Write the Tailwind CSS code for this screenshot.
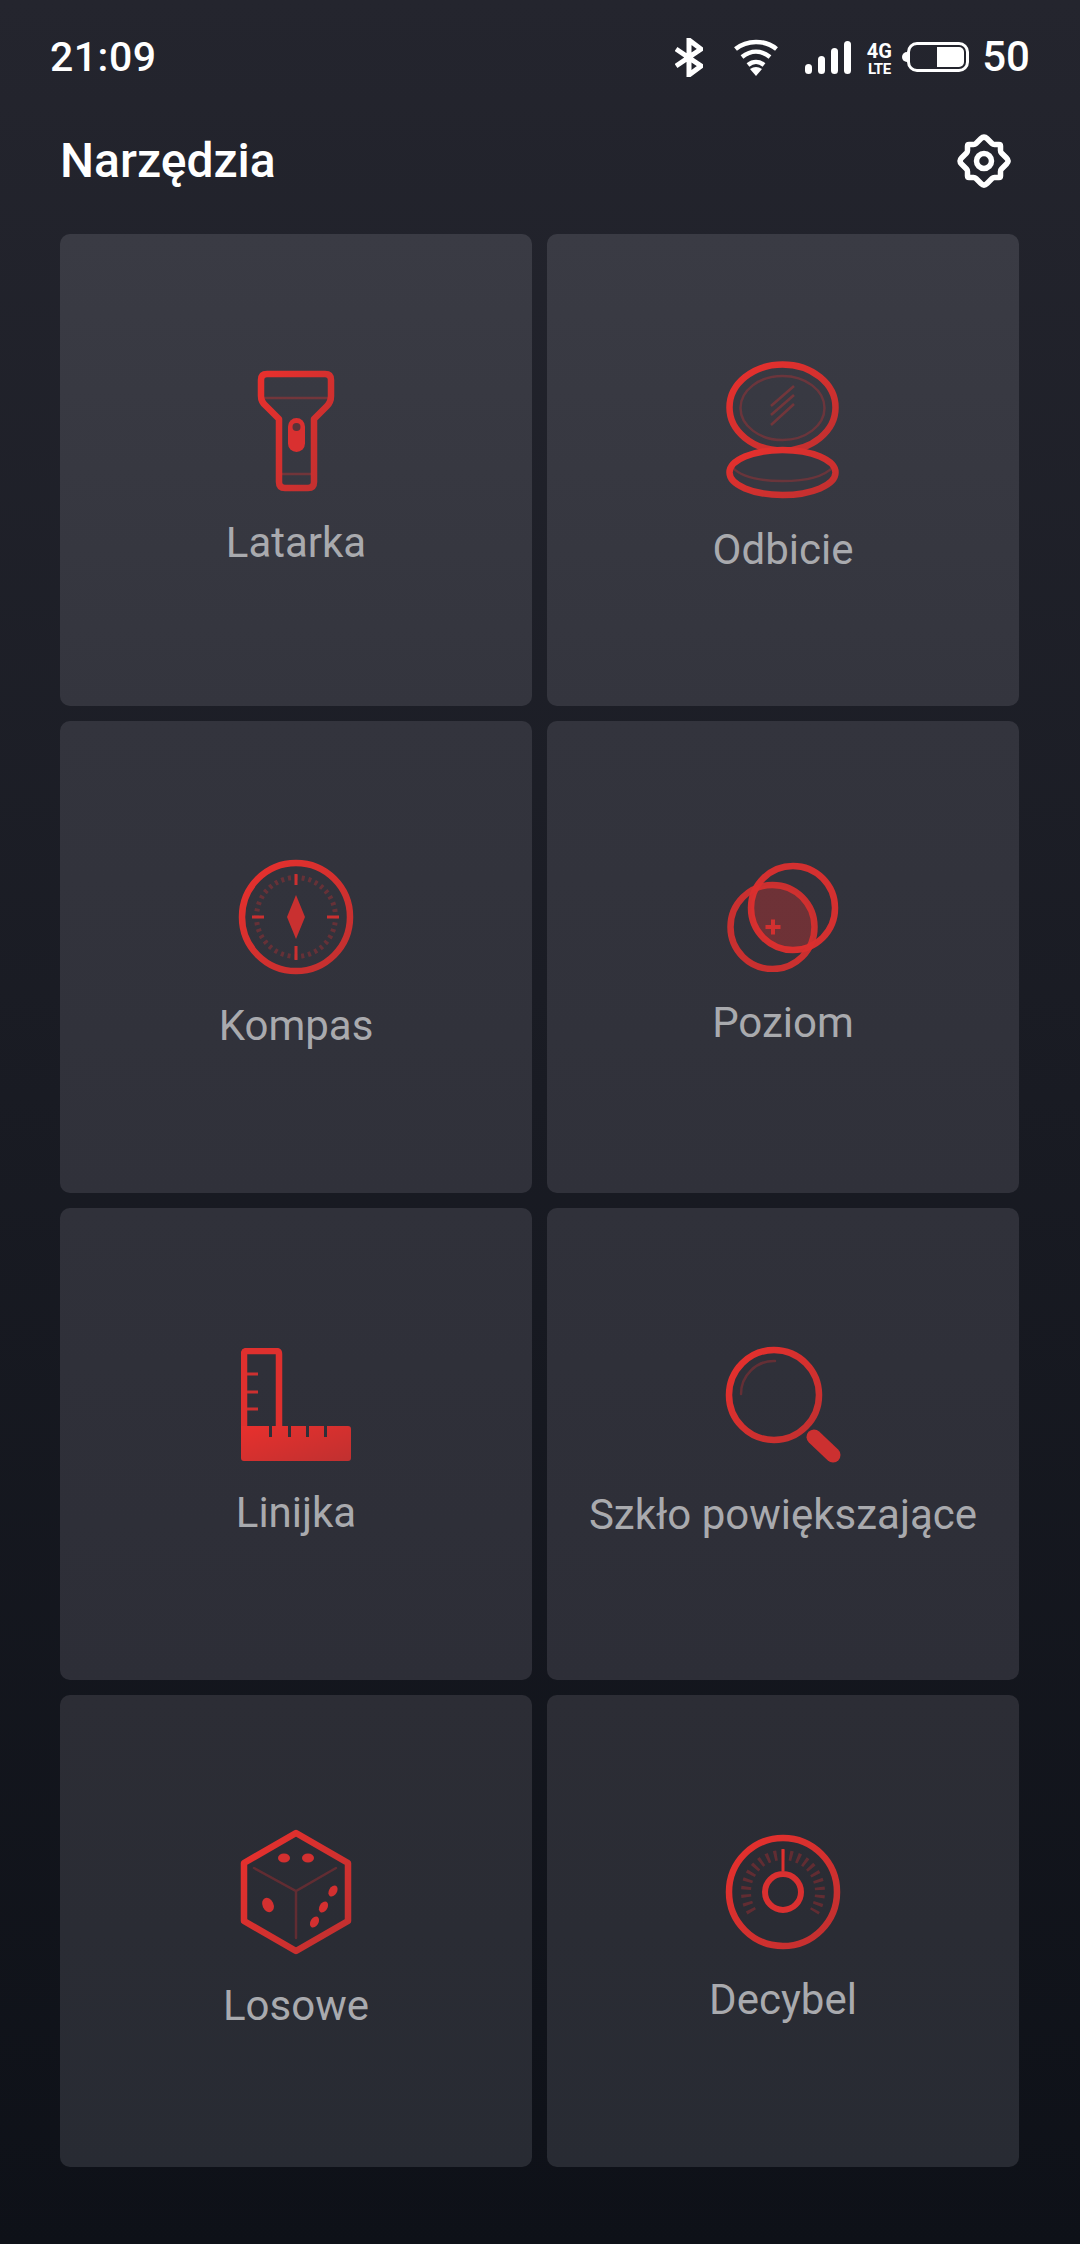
<!DOCTYPE html>
<html lang="pl">
<head>
    <meta charset="UTF-8">
    <meta name="viewport" content="width=device-width, initial-scale=1.0">
    <title>Narzędzia</title>
    <script src="https://cdn.jsdelivr.net/npm/@tailwindcss/browser@4"></script>
</head>
<body class="w-[1080px] h-[2244px] overflow-hidden bg-gradient-to-b from-[#24252e] to-[#0e1118] font-['Roboto',sans-serif] text-white">

    <!-- shared gradient for the red icons -->
    <svg class="absolute w-0 h-0">
        <defs>
            <linearGradient id="red" x1="0" y1="0" x2="1" y2="1">
                <stop offset="0" stop-color="#e8302d"/>
                <stop offset="1" stop-color="#c03030"/>
            </linearGradient>
        </defs>
    </svg>

    <!-- status bar -->
    <div class="flex items-center justify-between h-[58px] mt-[28px] pl-[50px] pr-[50px]">
        <span class="text-[41px] leading-none font-medium tracking-[0.5px]">21:09</span>
        <div class="flex items-center">
            <svg class="w-[28px] h-[39px]" viewBox="0 0 28 39" fill="none" stroke="#fff" stroke-width="5">
                <path d="M1 11 L26 28 L14 37 V2 L26 11 L1 28"/>
            </svg>
            <svg class="w-[44px] h-[37px] ml-[31px]" viewBox="0 0 44 37" fill="none" stroke="#fff" stroke-width="4.5">
                <path d="M1.5 10 C13 0.5 31 0.5 42.5 10"/>
                <path d="M8 18 C17 11 27 11 36 18"/>
                <path d="M14 26 C19 22 25 22 30 26"/>
                <path d="M16 30 Q22 26 28 30 L22 37 Z" fill="#fff" stroke="none"/>
            </svg>
            <div class="flex items-end gap-[6px] h-[33px] ml-[27px]">
                <div class="w-[7px] h-[10px] rounded-full bg-white"></div>
                <div class="w-[7px] h-[18px] rounded-full bg-white"></div>
                <div class="w-[7px] h-[26px] rounded-full bg-white"></div>
                <div class="w-[7px] h-[33px] rounded-full bg-white"></div>
            </div>
            <div class="flex flex-col items-center w-[24px] ml-[16px] mt-[3px] font-bold leading-none">
                <span class="text-[20px] h-[20px]">4G</span>
                <span class="text-[15px] h-[15px] mt-[1px] tracking-[-0.5px]">LTE</span>
            </div>
            <div class="flex items-center ml-[11px]">
                <div class="w-[5px] h-[10px] rounded-l-full bg-white"></div>
                <div class="flex justify-end w-[62px] h-[30px] p-[2px] rounded-[10px] border-[3px] border-white">
                    <div class="w-[27px] h-full rounded-r-[5px] bg-white"></div>
                </div>
            </div>
            <span class="ml-[13px] text-[42px] leading-none font-medium">50</span>
        </div>
    </div>

    <!-- header -->
    <header class="flex items-center justify-between h-[72px] mt-[39px] pl-[60px] pr-[68px]">
        <h1 class="text-[48px] leading-none font-medium">Narzędzia</h1>
        <svg class="w-[56px] h-[56px]" viewBox="0 0 56 56" fill="none" stroke="#fff" stroke-width="5.5" stroke-linejoin="round">
            <path d="M25 5.5 Q28 2.5 31 5.5 L36 10.5 Q37 11.5 38.5 11.5 H43 Q44.5 11.5 44.5 13 V17.5 Q44.5 19 45.5 20 L50.5 25 Q53.5 28 50.5 31 L45.5 36 Q44.5 37 44.5 38.5 V43 Q44.5 44.5 43 44.5 H38.5 Q37 44.5 36 45.5 L31 50.5 Q28 53.5 25 50.5 L20 45.5 Q19 44.5 17.5 44.5 H13 Q11.5 44.5 11.5 43 V38.5 Q11.5 37 10.5 36 L5.5 31 Q2.5 28 5.5 25 L10.5 20 Q11.5 19 11.5 17.5 V13 Q11.5 11.5 13 11.5 H17.5 Q19 11.5 20 10.5 Z"/>
            <circle cx="28" cy="28" r="7.5"/>
        </svg>
    </header>

    <!-- tools -->
    <main class="grid grid-cols-[472px_472px] gap-x-[15px] gap-y-[15px] mt-[37px] pl-[60px]">

        <div class="flex flex-col items-center h-[472px] pt-[135px] rounded-[10px] bg-gradient-to-b from-[#3a3b44] to-[#34353e]">
            <svg class="w-[80px] h-[124px]" viewBox="255 369 80 124" fill="none" stroke-linejoin="round">
                <path d="M266 374 H324 Q330 374 330 380 V396 Q330 402 326 406 L313 419 V482 Q313 488 307 488 H284 Q278 488 278 482 V419 L265 406 Q260 402 260 396 V380 Q260 374 266 374 Z" stroke="url(#red)" stroke-width="6.5"/>
                <path d="M263 398 H327 M281 474 H310" stroke="#e0302d" stroke-opacity=".35" stroke-width="2.5"/>
                <rect x="287" y="418" width="17" height="34" rx="8.5" fill="#d93030"/>
                <circle cx="295.5" cy="427" r="4" fill="#5a3339"/>
            </svg>
            <span class="mt-[29px] text-[42px] leading-none text-[#a9aaae]">Latarka</span>
        </div>

        <div class="flex flex-col items-center h-[472px] pt-[126px] rounded-[10px] bg-gradient-to-b from-[#3a3b44] to-[#34353e]">
            <svg class="w-[118px] h-[140px]" viewBox="724 360 118 140" fill="none">
                <ellipse cx="782.5" cy="407.5" rx="53" ry="43" stroke="url(#red)" stroke-width="6.5"/>
                <ellipse cx="782.5" cy="408" rx="42" ry="32" stroke="#e0302d" stroke-opacity=".3" stroke-width="2.5"/>
                <path d="M794 386 L771 406 M794 395 L771 415 M794 404 L771 425" stroke="#e0302d" stroke-opacity=".35" stroke-width="2.5"/>
                <ellipse cx="782.5" cy="472.5" rx="53" ry="22.5" fill="#373841" stroke="url(#red)" stroke-width="6.5"/>
                <path d="M732 467 C742 478 762 481 782.5 481 C803 481 823 478 833 467" stroke="#e0302d" stroke-opacity=".3" stroke-width="2.5"/>
            </svg>
            <span class="mt-[29px] text-[42px] leading-none text-[#a9aaae]">Odbicie</span>
        </div>

        <div class="flex flex-col items-center h-[472px] pt-[138px] rounded-[10px] bg-gradient-to-b from-[#33343d] to-[#30313a]">
            <svg class="w-[116px] h-[116px]" viewBox="238 860 116 116" fill="none">
                <circle cx="296" cy="918" r="54" stroke="url(#red)" stroke-width="6.5"/>
                <circle cx="296" cy="918" r="39.5" stroke="#e0302d" stroke-opacity=".3" stroke-width="5" stroke-dasharray="3 3.894" stroke-dashoffset="1.5"/>
                <path d="M296 875 V886 M296 947 V961 M252 918 H264 M327 918 H339" stroke="#cc3030" stroke-width="3"/>
                <path d="M296 896 L305 918 L296 940 L287 918 Z" fill="#c93030"/>
            </svg>
            <span class="mt-[30px] text-[42px] leading-none text-[#a9aaae]">Kompas</span>
        </div>

        <div class="flex flex-col items-center h-[472px] pt-[141px] rounded-[10px] bg-gradient-to-b from-[#33343d] to-[#30313a]">
            <svg class="w-[112px] h-[110px]" viewBox="727 862 112 110" fill="none">
                <path d="M755.8 888.5 A42 42 0 0 1 809.7 946.5 A42 42 0 0 1 755.8 888.5 Z" fill="#e0302d" fill-opacity=".35"/>
                <circle cx="793" cy="908" r="42" stroke="#e5302f" stroke-opacity=".9" stroke-width="6.5"/>
                <circle cx="772.5" cy="927" r="42" stroke="#da302f" stroke-opacity=".9" stroke-width="6.5"/>
                <path d="M765.5 927 H780.5 M773 919.5 V934.5" stroke="#d33030" stroke-width="4"/>
            </svg>
            <span class="mt-[30px] text-[42px] leading-none text-[#a9aaae]">Poziom</span>
        </div>

        <div class="flex flex-col items-center h-[472px] pt-[140px] rounded-[10px] bg-gradient-to-b from-[#30313a] to-[#2d2e37]">
            <svg class="w-[110px] h-[113px]" viewBox="241 1348 110 113" fill="none">
                <path d="M244 1430 V1354 Q244 1351 247 1351 H276 Q279 1351 279 1354 V1430" stroke="#df302e" stroke-width="6.5"/>
                <path d="M247 1374 H258 M247 1392 H258 M247 1409 H258" stroke="#cc3030" stroke-width="3"/>
                <path d="M241 1426 H269 V1437 H272 V1426 H288 V1437 H291 V1426 H306 V1437 H309 V1426 H324 V1437 H327 V1426 H348 Q351 1426 351 1429 V1458 Q351 1461 348 1461 H244 Q241 1461 241 1458 Z" fill="url(#red)"/>
            </svg>
            <span class="mt-[31px] text-[42px] leading-none text-[#a9aaae]">Linijka</span>
        </div>

        <div class="flex flex-col items-center h-[472px] pt-[138px] rounded-[10px] bg-gradient-to-b from-[#30313a] to-[#2d2e37]">
            <svg class="w-[116px] h-[120px]" viewBox="724 1345 116 120" fill="none">
                <circle cx="773" cy="1394" r="45" stroke="url(#red)" stroke-width="6.5"/>
                <path d="M740 1393 A33 33 0 0 1 774 1360" stroke="#e0302d" stroke-opacity=".3" stroke-width="2.5" stroke-linecap="round"/>
                <path d="M813 1436 L832 1454" stroke="#cc3030" stroke-width="15" stroke-linecap="round"/>
            </svg>
            <span class="mt-[28px] text-[42px] leading-none text-[#a9aaae]">Szkło powiększające</span>
        </div>

        <div class="flex flex-col items-center h-[472px] pt-[134px] rounded-[10px] bg-gradient-to-b from-[#2c2d35] to-[#282b33]">
            <svg class="w-[112px] h-[126px]" viewBox="240 1829 112 126" fill="none">
                <path d="M296 1833 L348 1863 V1921 L296 1951 L244 1921 V1863 Z" stroke="url(#red)" stroke-width="6.5" stroke-linejoin="round"/>
                <path d="M254 1868 L296 1891 L336 1868 M296 1891 V1938" stroke="#e0302d" stroke-opacity=".3" stroke-width="2.5" stroke-linecap="round"/>
                <ellipse cx="284" cy="1858" rx="6" ry="4.5" fill="#d33030"/>
                <ellipse cx="308" cy="1858" rx="6" ry="4.5" fill="#d33030"/>
                <ellipse cx="268" cy="1905" rx="5.5" ry="7.5" transform="rotate(-25 268 1905)" fill="#d33030"/>
                <ellipse cx="333" cy="1891" rx="4" ry="6" transform="rotate(30 333 1891)" fill="#d33030"/>
                <ellipse cx="323.5" cy="1907" rx="4" ry="6" transform="rotate(30 323.5 1907)" fill="#d33030"/>
                <ellipse cx="314.5" cy="1922" rx="4" ry="6" transform="rotate(30 314.5 1922)" fill="#d33030"/>
            </svg>
            <span class="mt-[30px] text-[42px] leading-none text-[#a9aaae]">Losowe</span>
        </div>

        <div class="flex flex-col items-center h-[472px] pt-[139px] rounded-[10px] bg-gradient-to-b from-[#2c2d35] to-[#282b33]">
            <svg class="w-[116px] h-[116px]" viewBox="725 1834 116 116" fill="none">
                <circle cx="783" cy="1892" r="54" stroke="url(#red)" stroke-width="6.5"/>
                <path d="M751.73 1911.8 A37 37 0 1 1 814.27 1911.8" stroke="#e0302d" stroke-opacity=".3" stroke-width="10" stroke-dasharray="3 4.749"/>
                <circle cx="783" cy="1892" r="18" stroke="#d93030" stroke-width="6"/>
                <path d="M783 1849 V1871" stroke="#e0302d" stroke-width="3"/>
            </svg>
            <span class="mt-[29px] text-[42px] leading-none text-[#a9aaae]">Decybel</span>
        </div>
    </main>
</body>
</html>
